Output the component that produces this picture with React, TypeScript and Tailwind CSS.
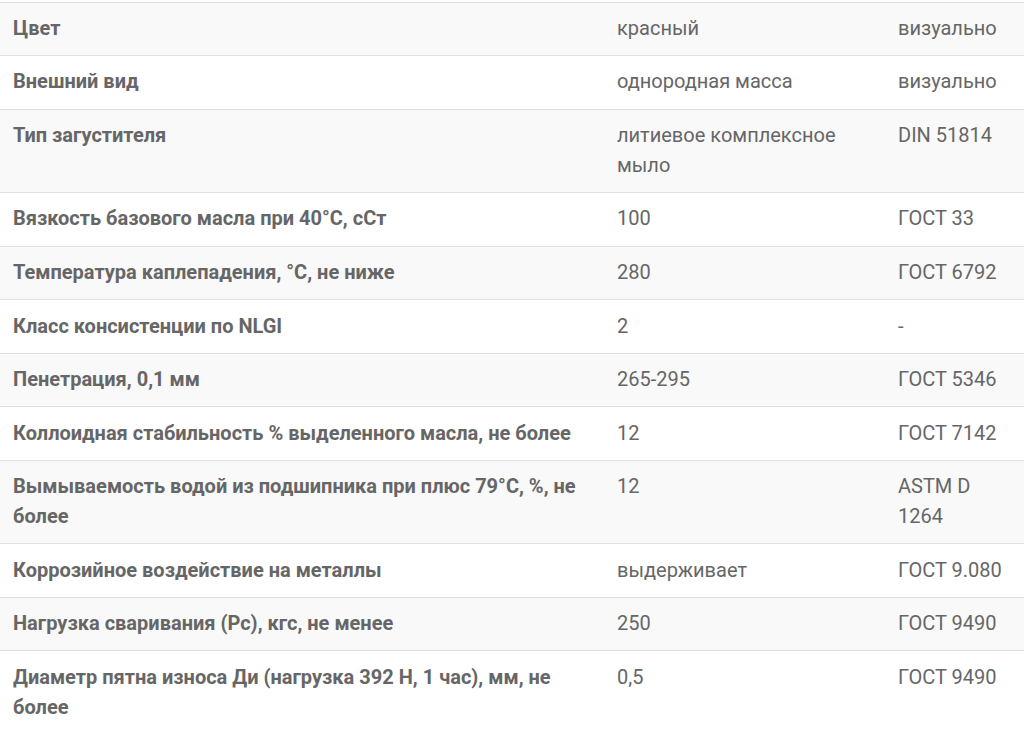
import React from "react";

const rows: [string, string, string][] = [
  ["Цвет", "красный", "визуально"],
  ["Внешний вид", "однородная масса", "визуально"],
  ["Тип загустителя", "литиевое комплексное мыло", "DIN 51814"],
  ["Вязкость базового масла при 40°C, сСт", "100", "ГОСТ 33"],
  ["Температура каплепадения, °C, не ниже", "280", "ГОСТ 6792"],
  ["Класс консистенции по NLGI", "2", "-"],
  ["Пенетрация, 0,1 мм", "265-295", "ГОСТ 5346"],
  ["Коллоидная стабильность % выделенного масла, не более", "12", "ГОСТ 7142"],
  ["Вымываемость водой из подшипника при плюс 79°C, %, не более", "12", "ASTM D 1264"],
  ["Коррозийное воздействие на металлы", "выдерживает", "ГОСТ 9.080"],
  ["Нагрузка сваривания (Pc), кгс, не менее", "250", "ГОСТ 9490"],
  ["Диаметр пятна износа Ди (нагрузка 392 Н, 1 час), мм, не более", "0,5", "ГОСТ 9490"],
];

export default function App() {
  return (
    <div className="w-[1024px] h-[730px] overflow-hidden bg-white pt-[1.5px]" style={{ fontFamily: "Roboto, 'Noto Sans', sans-serif" }}>
      <table className="w-full table-fixed border-collapse text-[20px] leading-[29.8px] text-[#666]">
        <colgroup>
          <col className="w-[604px]" />
          <col className="w-[281px]" />
          <col className="w-[139px]" />
        </colgroup>
        <tbody>
          {rows.map((r, i) => (
            <tr key={i} className={`border-t border-[#e0e0e0] ${i % 2 === 0 ? "bg-[#f9f9f9]" : "bg-white"}`}>
              <td className="px-[13px] py-[11.4px] align-top font-bold">{r[0]}</td>
              <td className="px-[13px] py-[11.4px] align-top">{r[1]}</td>
              <td className="px-[13px] py-[11.4px] align-top">{r[2]}</td>
            </tr>
          ))}
        </tbody>
      </table>
    </div>
  );
}
